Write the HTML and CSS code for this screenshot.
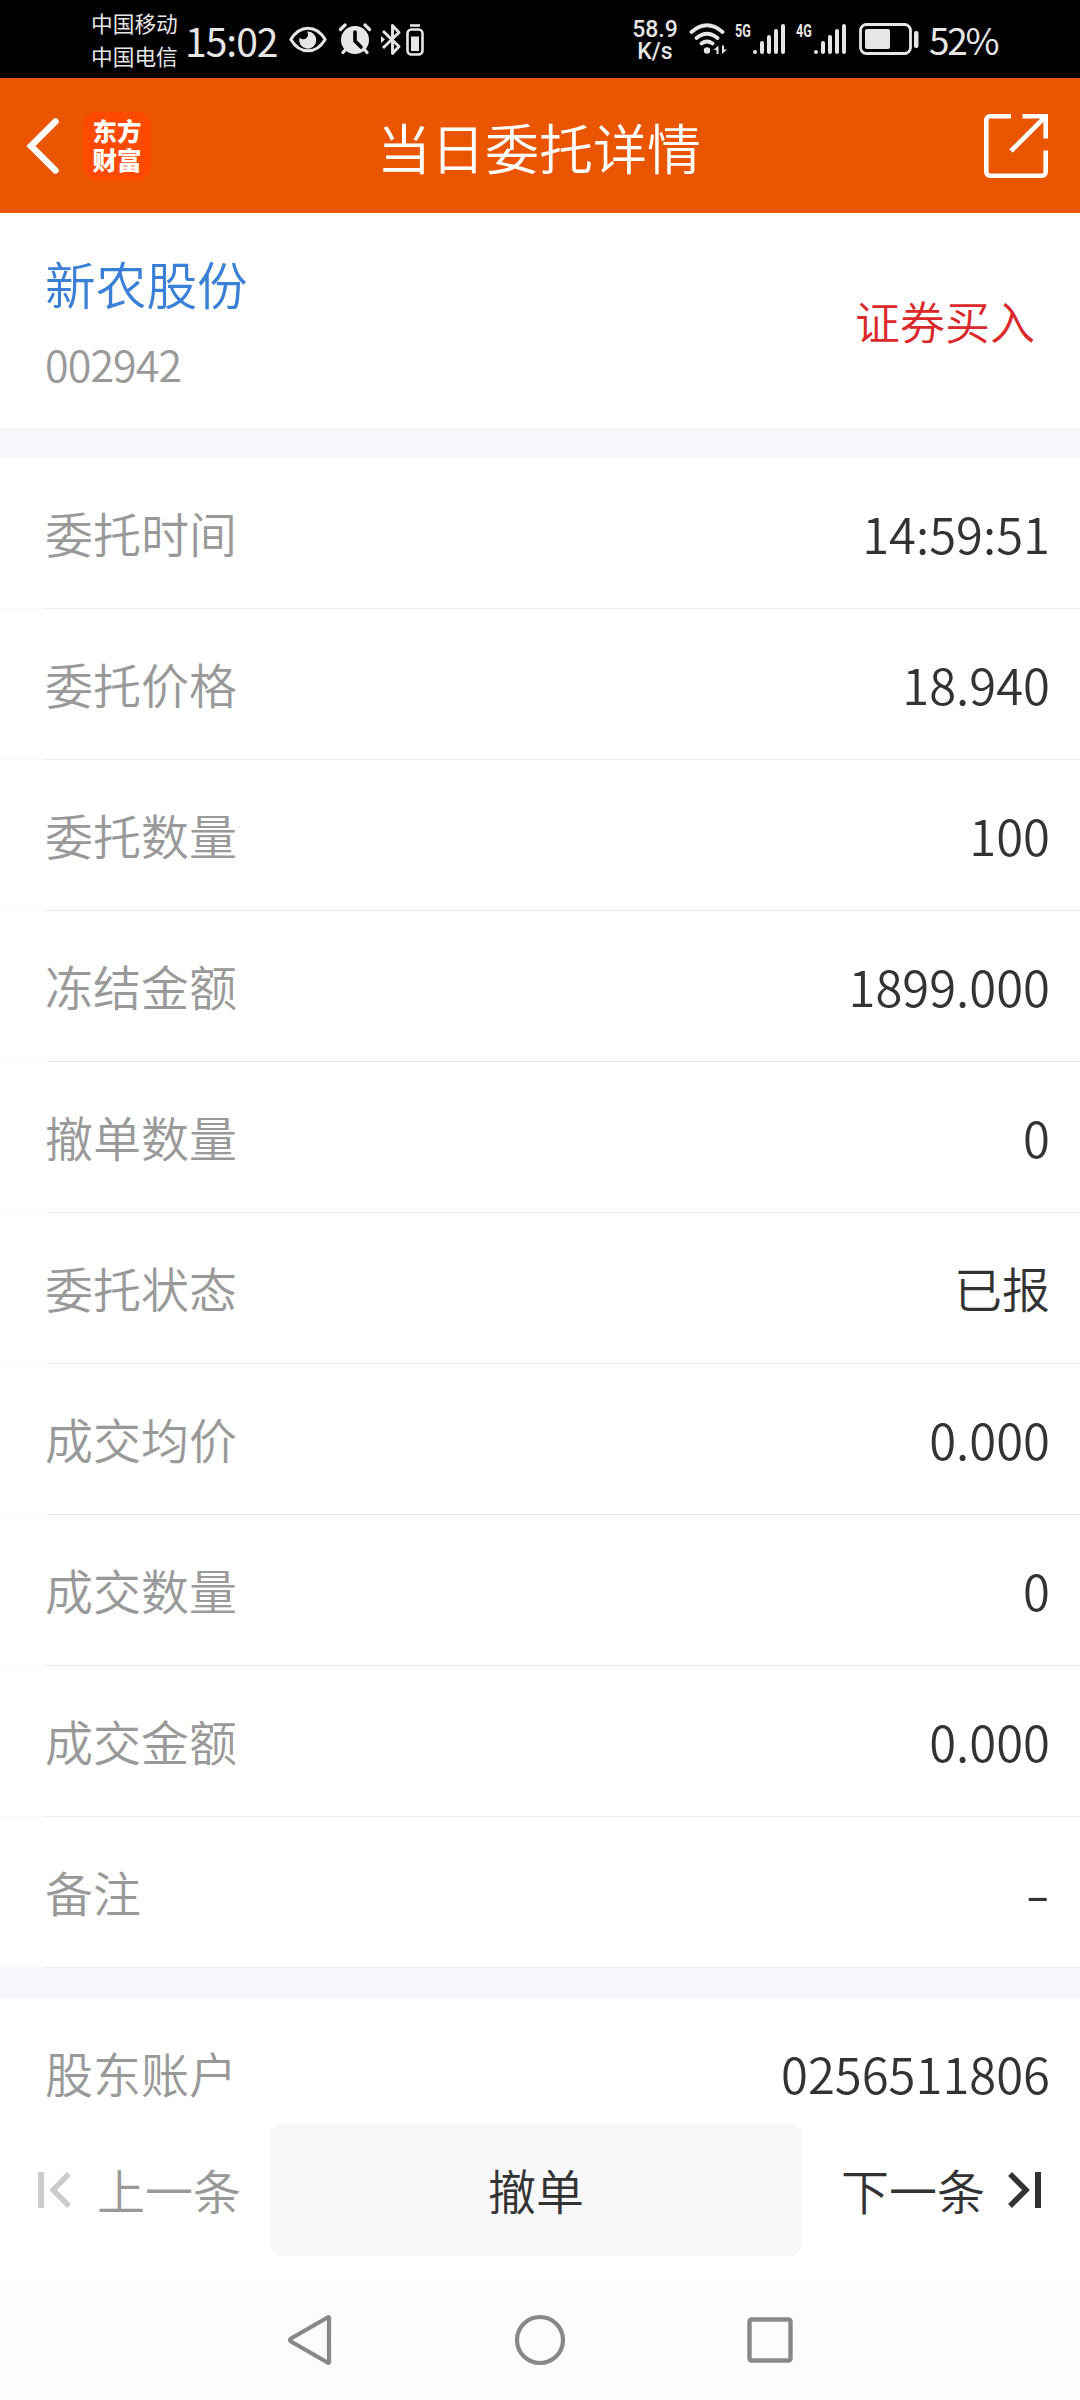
FILE: index.html
```html
<!DOCTYPE html>
<html lang="zh-CN">
<head>
<meta charset="utf-8">
<title>当日委托详情</title>
<link rel="stylesheet" href="styles.css">
</head>
<body>
<div class="screen">
  <div class="status">
    <div class="carriers"><span>中国移动</span><span>中国电信</span></div>
    <span class="clock">15:02</span>
    <svg class="eye" width="38" height="27" viewBox="0 0 38 27"><path d="M1.8 13.5C6 6.500 12 2.200 19 2.200S32 6.500 36.200 13.500C32 20.500 26 24.800 19 24.800S6 20.500 1.800 13.500Z" fill="none" stroke="#e6e6e6" stroke-width="3" stroke-linejoin="round"/><path d="M18 5.500a4.600 4.600 0 0 1-7.500 6A8.600 8.600 0 1 0 18 5.500Z" fill="#e6e6e6"/></svg>
    <svg class="alarm" width="34" height="32" viewBox="0 0 34 32"><g stroke="#e6e6e6" stroke-width="3.200" stroke-linecap="round"><path d="M2.500 6.500 7 2M31.500 6.500 27 2M8 26l-3 3.500M26 26l3 3.500"/></g><circle cx="17" cy="17" r="14" fill="#e6e6e6"/><path d="M17 9v9l6 6" fill="none" stroke="#000" stroke-width="3.600" stroke-linecap="round" stroke-linejoin="round"/></svg>
    <svg class="bt" width="21" height="33" viewBox="0 0 21 33"><path d="M2 8 18 23.500 11.500 30.500V2.500L18 9.500 2 25" fill="none" stroke="#e6e6e6" stroke-width="2.900" stroke-linejoin="round"/><path d="M0 13l4 3.500L0 20z" fill="#e6e6e6"/></svg>
    <svg class="cell" width="18" height="32" viewBox="0 0 18 32"><path d="M4 1.500h10" stroke="#e6e6e6" stroke-width="2.600"/><rect x="1.500" y="5.500" width="15" height="25" rx="4" fill="none" stroke="#e6e6e6" stroke-width="2.600"/><rect x="5" y="12.500" width="8" height="14.500" fill="#e6e6e6"/></svg>
    <div class="speed"><span>58.9</span><span>K/s</span></div>
    <svg class="wifi" width="39" height="32" viewBox="0 0 39 32"><g fill="none" stroke="#e6e6e6" stroke-width="3.800" stroke-linecap="round"><path d="M2.500 9Q18 -4.500 33.500 9M7.500 15Q18 6.500 28.500 15M12.500 20.500Q18 16.500 23.500 20.500"/></g><circle cx="18" cy="27.500" r="3.200" fill="#e6e6e6"/><path d="M24.500 27l5-4.500v8.500h-2v-4zM38 26.500l-5 4.500v-8.500h2v4z" fill="#e6e6e6"/></svg>
    <span class="gen gen5">5G</span>
    <svg class="signal" width="34" height="32" viewBox="0 0 34 32"><g stroke="#e6e6e6" stroke-width="4" stroke-linecap="round"><path d="M3 29v.1M10 20v9M17 14v15M24 8v21M31 3v26"/></g></svg>
    <span class="gen gen4">4G</span>
    <svg class="signal" width="34" height="32" viewBox="0 0 34 32"><g stroke="#e6e6e6" stroke-width="4" stroke-linecap="round"><path d="M3 29v.1M10 20v9M17 14v15M24 8v21M31 3v26"/></g></svg>
    <svg class="battery" width="61" height="32" viewBox="0 0 61 32"><rect x="1.500" y="1.500" width="50" height="29" rx="6" fill="none" stroke="#e6e6e6" stroke-width="2.800"/><rect x="6" y="6" width="25" height="20" rx="2" fill="#e6e6e6"/><rect x="55" y="8" width="4.500" height="17" rx="2" fill="#e6e6e6"/></svg>
    <span class="percent">52%</span>
  </div>

  <header class="header">
    <div class="side">
      <svg class="back" width="34" height="58" viewBox="0 0 34 58"><path d="M29.500 4.500 5 29 29.500 53.500" fill="none" stroke="#fff" stroke-width="6.500" stroke-linecap="round"/></svg>
      <div class="logo"><span>东方</span><span>财富</span></div>
    </div>
    <h1 class="title">当日委托详情</h1>
    <div class="side side-end">
      <svg width="64" height="64" viewBox="0 0 64 64"><g fill="none" stroke="#fff" stroke-width="4.600"><path d="M27 2.300H6a3.700 3.700 0 0 0-3.700 3.700V58a3.700 3.700 0 0 0 3.700 3.700H58a3.700 3.700 0 0 0 3.700-3.700V36.500M38.500 2.300H61.700V24.500M60.500 3.500 27 37"/></g></svg>
    </div>
  </header>

  <section class="stock">
    <div class="stock-id"><span class="name">新农股份</span><span class="code">002942</span></div>
    <span class="direction">证券买入</span>
  </section>

  <section class="rows">
    <div class="row"><span class="label">委托时间</span><span class="value">14:59:51</span></div>
    <div class="row"><span class="label">委托价格</span><span class="value">18.940</span></div>
    <div class="row"><span class="label">委托数量</span><span class="value">100</span></div>
    <div class="row"><span class="label">冻结金额</span><span class="value">1899.000</span></div>
    <div class="row"><span class="label">撤单数量</span><span class="value">0</span></div>
    <div class="row"><span class="label">委托状态</span><span class="value han">已报</span></div>
    <div class="row"><span class="label">成交均价</span><span class="value">0.000</span></div>
    <div class="row"><span class="label">成交数量</span><span class="value">0</span></div>
    <div class="row"><span class="label">成交金额</span><span class="value">0.000</span></div>
    <div class="row"><span class="label">备注</span><span class="value dash">-</span></div>
  </section>

  <section class="rows account">
    <div class="row"><span class="label">股东账户</span><span class="value">0256511806</span></div>
  </section>

  <div class="actions">
    <div class="step prev">
      <svg width="34" height="38" viewBox="0 0 34 38"><path d="M3 1v36" stroke="#ccc" stroke-width="6"/><path d="M31 3 15 19 31 35" fill="none" stroke="#ccc" stroke-width="5.500"/></svg>
      <span>上一条</span>
    </div>
    <button class="cancel">撤单</button>
    <div class="step next">
      <span>下一条</span>
      <svg width="34" height="38" viewBox="0 0 34 38"><path d="M31 1v36" stroke="#333" stroke-width="6"/><path d="M3 3 19 19 3 35" fill="none" stroke="#333" stroke-width="5.500"/></svg>
    </div>
  </div>

  <nav class="nav">
    <svg width="46" height="52" viewBox="0 0 46 52"><path d="M42 3.500V48.500Q41.500 49 40.500 48.500L4 27.500Q2 26 4 24.500L40.500 3.500Q41.500 3 42 3.500Z" fill="none" stroke="#888" stroke-width="4.200" stroke-linejoin="round"/></svg>
    <svg width="52" height="52" viewBox="0 0 52 52"><circle cx="26" cy="26" r="23" fill="none" stroke="#888" stroke-width="4.200"/></svg>
    <svg width="46" height="46" viewBox="0 0 46 46"><rect x="2.500" y="2.500" width="41" height="41" rx="2" fill="none" stroke="#888" stroke-width="4.400"/></svg>
  </nav>
</div>
</body>
</html>
```
FILE: styles.css
```css
* { box-sizing: border-box; }
body {
  margin: 0;
  background: #fff;
  font-family: "Noto Sans CJK SC", sans-serif;
  font-weight: 350;
  color: #333;
}
svg { display: block; flex: none; }
.screen {
  width: 1080px;
  height: 2400px;
  display: flex;
  flex-direction: column;
  overflow: hidden;
}

/* status bar */
.status {
  height: 78px;
  flex: none;
  display: flex;
  align-items: center;
  background: #000;
  color: #e6e6e6;
  padding-left: 91px;
  white-space: nowrap;
}
.carriers {
  width: 88px;
  display: flex;
  flex-direction: column;
  font-size: 21.700px;
  line-height: 33px;
  font-weight: 400;
}
.clock {
  width: 110px;
  padding: 1px 0 0 6px;
  font-size: 39px;
  line-height: 48px;
  font-weight: 400;
  letter-spacing: -1px;
}
.alarm { margin-left: 11px; }
.bt { margin-left: 9px; }
.cell { margin: 1px 0 0 4px; }
.speed {
  width: 60px;
  margin-left: 201px;
  display: flex;
  flex-direction: column;
  align-items: center;
  font: 500 23px/22px Roboto, sans-serif;
  padding-top: 4px;
}
.wifi { margin-left: 4px; }
.gen {
  align-self: flex-start;
  margin-top: 21px;
  font: 700 17.500px/20px "Roboto", sans-serif;
  transform: scaleX(.72);
  transform-origin: left;
}
.gen5 { width: 17px; margin-left: 7px; }
.gen4 { width: 17px; margin-left: 10px; }
.battery { margin-left: 12px; }
.percent {
  margin-left: 9px;
  font-size: 37px;
  line-height: 48px;
  font-weight: 400;
  letter-spacing: -2.300px;
}

/* title bar */
.header {
  height: 135px;
  flex: none;
  display: flex;
  align-items: center;
  justify-content: space-between;
  padding: 0 32px 0 26px;
  background: #ea5502;
  color: #fff;
}
.side { width: 130px; display: flex; align-items: center; }
.side-end { justify-content: flex-end; }
.logo {
  width: 68px;
  height: 68px;
  margin-left: 23px;
  padding-bottom: 2px;
  display: flex;
  flex-direction: column;
  align-items: center;
  justify-content: center;
  border-radius: 14px;
  background: #ff4800;
  font-weight: 900;
  font-size: 24.500px;
  line-height: 29px;
}
.title { margin: 3px 0 0 4px; font-size: 54px; line-height: 80px; font-weight: 350; }

/* stock summary */
.stock {
  height: 215px;
  flex: none;
  display: flex;
  align-items: center;
  justify-content: space-between;
  padding: 0 45px;
}
.stock-id { display: flex; flex-direction: column; padding-top: 5px; }
.name { font-size: 50.700px; line-height: 76px; color: #3a80d6; }
.code { margin-top: 4px; font-size: 43px; line-height: 76px; letter-spacing: -.900px; color: #999; }
.direction { font-size: 45px; color: #d9292b; }

/* detail rows */
.rows { border-top: 30px solid #f6f7fa; }
.row {
  height: 151px;
  display: flex;
  align-items: center;
  justify-content: space-between;
  padding: 0 30px 3px 45px;
  font-size: 48px;
  background:
    linear-gradient(#ebebec, #ebebec) 45px 100% / 100% 1px no-repeat,
    linear-gradient(#fafafa, #fafafa) 0 100% / 45px 1px no-repeat;
}
.account .row { background: none; }
.label { color: #999; }
.value { font-size: 49px; line-height: 76px; padding-top: 2px; }
.value.han { font-size: 48px; padding-top: 0; }
.value.dash { transform: scaleX(1.450); transform-origin: right; }
.account { height: 156px; flex: none; }

/* bottom actions */
.actions {
  height: 156px;
  flex: none;
  display: flex;
  align-items: flex-start;
  font-size: 48px;
  background: #fff;
}
.step { width: 270px; height: 132px; display: flex; align-items: center; }
.step span { padding-bottom: 3px; }
.prev { color: #999; padding-left: 38px; gap: 25px; }
.next { padding-left: 39px; gap: 22px; width: 278px; }
.cancel {
  width: 532px;
  height: 132px;
  padding: 0 0 3px;
  border: 0;
  border-radius: 12px;
  background: #f8f8fb;
  font: inherit;
  color: #333;
}

/* system navigation */
.nav {
  height: 120px;
  flex: none;
  display: flex;
  align-items: center;
  justify-content: center;
  gap: 181px;
  background: #fcfcfc;
}
```
